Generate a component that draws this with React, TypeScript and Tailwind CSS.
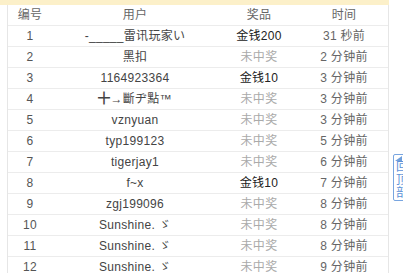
import React from "react";

type Row = { n: string; user: string; prize: string; win: boolean; time: string };

const rows: Row[] = [
  { n: "1", user: "-_____雷讯玩家い", prize: "金钱200", win: true, time: "31 秒前" },
  { n: "2", user: "黑扣", prize: "未中奖", win: false, time: "2 分钟前" },
  { n: "3", user: "1164923364", prize: "金钱10", win: true, time: "3 分钟前" },
  { n: "4", user: "╋→斷ヂ點™", prize: "未中奖", win: false, time: "3 分钟前" },
  { n: "5", user: "vznyuan", prize: "未中奖", win: false, time: "3 分钟前" },
  { n: "6", user: "typ199123", prize: "未中奖", win: false, time: "5 分钟前" },
  { n: "7", user: "tigerjay1", prize: "未中奖", win: false, time: "6 分钟前" },
  { n: "8", user: "f~x", prize: "金钱10", win: true, time: "7 分钟前" },
  { n: "9", user: "zgj199096", prize: "未中奖", win: false, time: "8 分钟前" },
  { n: "10", user: "Sunshine. ゞ", prize: "未中奖", win: false, time: "8 分钟前" },
  { n: "11", user: "Sunshine. ゞ", prize: "未中奖", win: false, time: "8 分钟前" },
  { n: "12", user: "Sunshine. ゞ", prize: "未中奖", win: false, time: "9 分钟前" },
];

export default function App() {
  return (
    <div
      className="relative w-[403px] h-[273px] overflow-hidden bg-white text-[12px] tracking-[0.3px]"
      style={{ fontFamily: '"Liberation Sans", "Noto Sans CJK SC", sans-serif' }}
    >
      <div className="w-[389px] h-[5px] bg-[#fcf0c9]" />
      <div className="ml-[7px] w-[382px] border-l border-r border-[#e6e6e6]">
        <div className="flex h-[21px] border-b border-[#ececec] leading-[20px] text-[#666]">
          <div className="w-[44px] text-center">编号</div>
          <div className="w-[166px] text-center">用户</div>
          <div className="w-[82px] text-center">奖品</div>
          <div className="w-[88px] text-center">时间</div>
        </div>
        {rows.map((r, i) => (
          <div key={i} className="flex h-[21px] border-b border-[#ececec] leading-[20px]">
            <div className="w-[44px] text-center text-[#555]">{r.n}</div>
            <div className="w-[166px] text-center text-[#444] whitespace-nowrap">{r.user}</div>
            <div className={`w-[82px] text-center ${r.win ? "text-[#222]" : "text-[#aaa]"}`}>{r.prize}</div>
            <div className="w-[88px] text-center text-[#666]">{r.time}</div>
          </div>
        ))}
      </div>
      <div className="absolute left-[393px] top-[154px] w-[20px] h-[47px] border border-[#78a5e0] rounded-[2px] bg-white">
        <svg className="absolute left-[1px] top-[1px]" width="7" height="5" viewBox="0 0 7 5">
          <polygon points="0,5 7,5 7,0" fill="#6f9fdc" />
        </svg>
        <div className="absolute left-[2px] top-[6px] flex flex-col text-[#5d92d8] text-[12px] leading-[13px]">
          <span>回</span>
          <span>顶</span>
          <span>部</span>
        </div>
      </div>
    </div>
  );
}
